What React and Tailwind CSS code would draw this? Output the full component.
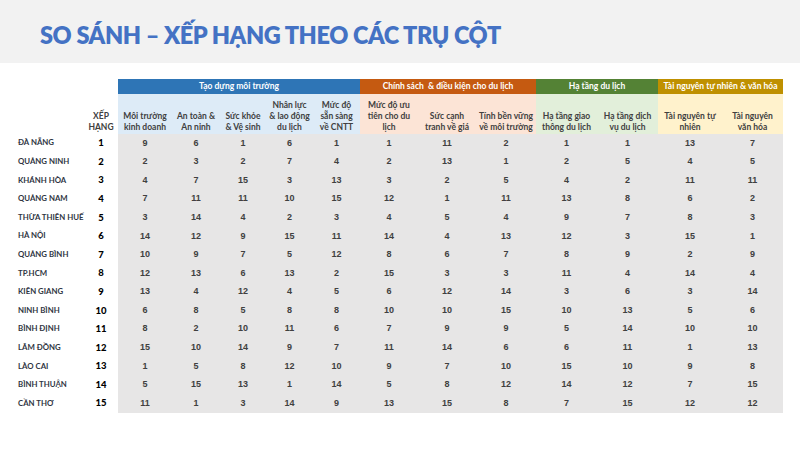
import React from 'react';

const groups = [
  { title: 'Tạo dựng môi trường', span: 'col-span-5', head: 'bg-[#2e75b6]' },
  { title: 'Chính sách  & điều kiện cho du lịch', span: 'col-span-3', head: 'bg-[#c55a11]' },
  { title: 'Hạ tầng du lịch', span: 'col-span-2', head: 'bg-[#548235]' },
  { title: 'Tài nguyên tự nhiên & văn hóa', span: 'col-span-2', head: 'bg-[#bf9000]' },
];

const subHeaders = [
  { label: 'Môi trường\nkinh doanh', bg: 'bg-[#ddebf7]' },
  { label: 'An toàn &\nAn ninh', bg: 'bg-[#ddebf7]' },
  { label: 'Sức khỏe\n& Vệ sinh', bg: 'bg-[#ddebf7]' },
  { label: 'Nhân lực\n& lao động\ndu lịch', bg: 'bg-[#ddebf7]' },
  { label: 'Mức độ\nsẵn sàng\nvề CNTT', bg: 'bg-[#ddebf7]' },
  { label: 'Mức độ ưu\ntiên cho du\nlịch', bg: 'bg-[#fce4d6]' },
  { label: 'Sức cạnh\ntranh về giá', bg: 'bg-[#fce4d6]' },
  { label: 'Tính bền vững\nvề môi trường', bg: 'bg-[#fce4d6]' },
  { label: 'Hạ tầng giao\nthông du lịch', bg: 'bg-[#e2efda]' },
  { label: 'Hạ tầng dịch\nvụ du lịch', bg: 'bg-[#e2efda]' },
  { label: 'Tài nguyên tự\nnhiên', bg: 'bg-[#fff2cc]' },
  { label: 'Tài nguyên\nvăn hóa', bg: 'bg-[#fff2cc]' },
];

const rows = [
  ['ĐÀ NẴNG', 1, [9, 6, 1, 6, 1, 1, 11, 2, 1, 1, 13, 7]],
  ['QUẢNG NINH', 2, [2, 3, 2, 7, 4, 2, 13, 1, 2, 5, 4, 5]],
  ['KHÁNH HÒA', 3, [4, 7, 15, 3, 13, 3, 2, 5, 4, 2, 11, 11]],
  ['QUẢNG NAM', 4, [7, 11, 11, 10, 15, 12, 1, 11, 13, 8, 6, 2]],
  ['THỪA THIÊN HUẾ', 5, [3, 14, 4, 2, 3, 4, 5, 4, 9, 7, 8, 3]],
  ['HÀ NỘI', 6, [14, 12, 9, 15, 11, 14, 4, 13, 12, 3, 15, 1]],
  ['QUẢNG BÌNH', 7, [10, 9, 7, 5, 12, 8, 6, 7, 8, 9, 2, 9]],
  ['TP.HCM', 8, [12, 13, 6, 13, 2, 15, 3, 3, 11, 4, 14, 4]],
  ['KIÊN GIANG', 9, [13, 4, 12, 4, 5, 6, 12, 14, 3, 6, 3, 14]],
  ['NINH BÌNH', 10, [6, 8, 5, 8, 8, 10, 10, 15, 10, 13, 5, 6]],
  ['BÌNH ĐỊNH', 11, [8, 2, 10, 11, 6, 7, 9, 9, 5, 14, 10, 10]],
  ['LÂM ĐỒNG', 12, [15, 10, 14, 9, 7, 11, 14, 6, 6, 11, 1, 13]],
  ['LÀO CAI', 13, [1, 5, 8, 12, 10, 9, 7, 10, 15, 10, 9, 8]],
  ['BÌNH THUẬN', 14, [5, 15, 13, 1, 14, 5, 8, 12, 14, 12, 7, 15]],
  ['CẦN THƠ', 15, [11, 1, 3, 14, 9, 13, 15, 8, 7, 15, 12, 12]],
];

const headFont = "font-['Lato','Liberation_Sans',sans-serif]";

export default function App() {
  return (
    <div className="w-[800px] h-[452px] bg-white overflow-hidden">
      <div className="h-[63px] bg-[#f2f2f2] flex items-center pl-[40px]">
        <h1 className={`${headFont} text-[23.5px] font-extrabold text-[#4472c4] tracking-[-0.4px] leading-none mt-[8px]`}>
          SO SÁNH – XẾP HẠNG THEO CÁC TRỤ CỘT
        </h1>
      </div>

      <div className="mt-[16px] ml-[18px] grid grid-cols-[66px_34px_54px_48px_46px_47px_47px_58px_58px_60px_61px_61px_64px_61px]">
        <div className="col-span-2" />
        {groups.map((g) => (
          <div
            key={g.title}
            className={`${g.span} ${g.head} ${headFont} h-[15px] flex items-center justify-center text-white text-[8.5px] font-bold whitespace-pre`}
          >
            {g.title}
          </div>
        ))}

        <div />
        <div className={`${headFont} h-[40px] flex items-end justify-center pb-[1px] text-[8.5px] leading-[11px] font-bold text-[#404040] text-center`}>
          XẾP<br />HẠNG
        </div>
        {subHeaders.map((s) => (
          <div
            key={s.label}
            className={`${s.bg} ${headFont} h-[40px] flex items-end justify-center pb-[1px] text-[8.5px] leading-[11px] font-bold text-[#404040] text-center whitespace-pre-line`}
          >
            {s.label}
          </div>
        ))}

        {rows.map(([name, rank, values]) => (
          <React.Fragment key={name}>
            <div className={`${headFont} h-[18.6px] flex items-center whitespace-nowrap text-[7.8px] font-bold text-[#2f3542]`}>
              {name}
            </div>
            <div className={`${headFont} h-[18.6px] flex items-center justify-center text-[9.5px] font-black text-black`}>
              {rank}
            </div>
            {values.map((v, i) => (
              <div
                key={i}
                className="h-[18.6px] bg-[#e7e6e6] flex items-center justify-center font-['Liberation_Sans',sans-serif] text-[9px] font-bold text-[#404040]"
              >
                {v}
              </div>
            ))}
          </React.Fragment>
        ))}
      </div>
    </div>
  );
}
